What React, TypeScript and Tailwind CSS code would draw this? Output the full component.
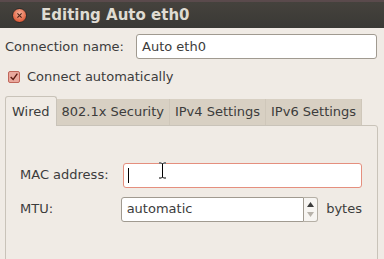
const font = { fontFamily: '"DejaVu Sans", sans-serif' };

const Tab = ({ label, active }: { label: string; active?: boolean }) =>
  active ? (
    <div className="h-[30px] px-[6px] pt-[5px] bg-[#f0ebe5] border border-b-0 border-[#c9c3b9] rounded-t-[3px] text-[#3c3c3c] relative z-10 -mb-px">
      {label}
    </div>
  ) : (
    <div className="h-[26px] mt-[4px] px-[5px] pt-[3px] bg-[#d8d0c3] border-r border-[#cfc7ba] text-[#3c3c3c]">
      {label}
    </div>
  );

const App = () => {
  return (
    <div className="w-[384px] h-[259px] overflow-hidden bg-[#f0ebe5] text-[13px] text-[#3c3c3c]" style={font}>
      {/* Title bar */}
      <div className="h-[28px] flex items-center bg-gradient-to-b from-[#45423d] to-[#3a3935] border-t-2 border-[#5a4a4c]">
        <div className="ml-[12px] w-[15px] h-[15px] rounded-full bg-[radial-gradient(circle_at_50%_35%,#f6b29c,#e0603e_70%,#b8452a)] border border-[#2e2c29] flex items-center justify-center">
          <svg viewBox="0 0 10 10" className="w-[7px] h-[7px]">
            <path d="M2 2 L8 8 M8 2 L2 8" stroke="#4a2418" strokeWidth="1.6" />
          </svg>
        </div>
        <span className="ml-[14px] text-[15px] font-bold text-[#dfdbd2]">Editing Auto eth0</span>
      </div>

      {/* Connection name */}
      <div className="flex items-center mt-[6px] pl-[5px] pr-[7px]">
        <span className="w-[131px]">Connection name:</span>
        <div className="flex-1 h-[25px] bg-white border border-[#a09a90] rounded-[3px] flex items-center px-[5px]">
          Auto eth0
        </div>
      </div>

      {/* Connect automatically */}
      <div className="flex items-center mt-[8px] pl-[8px]">
        <div className="w-[12px] h-[12px] rounded-[2px] bg-[#e9a89d] border border-[#c0665a] flex items-center justify-center">
          <svg viewBox="0 0 12 12" className="w-[10px] h-[10px]">
            <path d="M2 6 L5 9 L10 2" fill="none" stroke="#5a1a10" strokeWidth="1.6" />
          </svg>
        </div>
        <span className="ml-[7px]">Connect automatically</span>
      </div>

      {/* Tabs */}
      <div className="mt-[8px] ml-[5px] mr-[6px]">
        <div className="flex items-end">
          <Tab label="Wired" active />
          <Tab label="802.1x Security" />
          <Tab label="IPv4 Settings" />
          <Tab label="IPv6 Settings" />
        </div>
        <div className="h-[150px] border border-[#c9c3b9] rounded-tr-[3px] pt-[37px] pl-[14px] pr-[15px]">
          <div className="flex items-center">
            <span className="w-[103px]">MAC address:</span>
            <div className="flex-1 h-[25px] bg-white border border-[#e58f7e] rounded-[3px] flex items-center px-[4px] relative">
              <div className="w-px h-[15px] bg-black" />
              {/* mouse I-beam cursor */}
              <svg viewBox="0 0 9 17" className="absolute left-[34px] top-[-2px] w-[9px] h-[17px]">
                <path d="M1 1 H3.5 L4.5 2 L5.5 1 H8 M4.5 2 V15 M1 16 H3.5 L4.5 15 L5.5 16 H8" fill="none" stroke="#fff" strokeWidth="3" />
                <path d="M1 1 H3.5 L4.5 2 L5.5 1 H8 M4.5 2 V15 M1 16 H3.5 L4.5 15 L5.5 16 H8" fill="none" stroke="#000" strokeWidth="1" />
              </svg>
            </div>
          </div>
          <div className="flex items-center mt-[9px]">
            <span className="w-[102px]">MTU:</span>
            <div className="w-[186px] h-[25px] bg-white border border-[#a09a90] rounded-l-[3px] flex items-center px-[5px]">
              automatic
            </div>
            <div className="w-[14px] h-[25px] bg-[#f7f5f2] border border-l-0 border-[#b5afa5] rounded-r-[3px] flex flex-col items-center justify-center gap-[5px]">
              <svg viewBox="0 0 7 5" className="w-[7px] h-[5px]">
                <path d="M3.5 0 L7 5 H0 Z" fill="#3c3c3c" />
              </svg>
              <svg viewBox="0 0 7 5" className="w-[7px] h-[5px]">
                <path d="M0 0 H7 L3.5 5 Z" fill="#b8b3ab" />
              </svg>
            </div>
            <span className="ml-[8px]">bytes</span>
          </div>
        </div>
      </div>
    </div>
  );
};

export default App;
